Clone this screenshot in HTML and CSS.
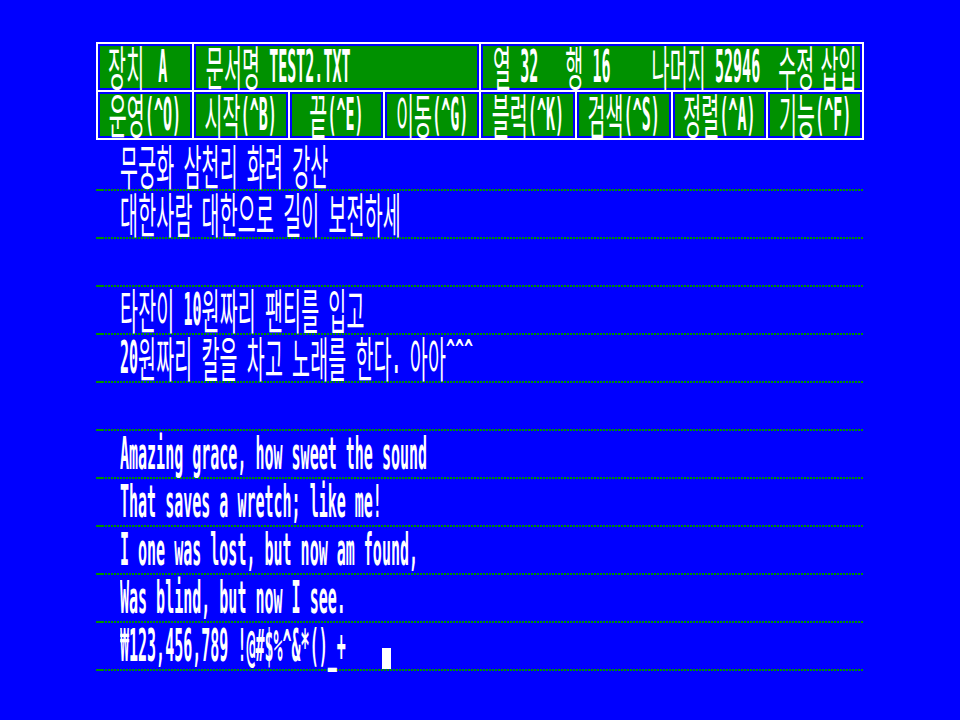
FILE: index.html
```html
<!DOCTYPE html>
<html lang="ko">
<head>
<meta charset="utf-8">
<title>문서 편집</title>
<link rel="stylesheet" href="styles.css">
</head>
<body>
<div class="screen">
  <div class="header">
    <div class="cell span1 pad-a"><span class="k">장치</span><span class="sp-a"></span><span class="e">A</span></div>
    <div class="cell span3 pad-b"><span class="k">문서명</span><span class="e"> TEST2.TXT</span></div>
    <div class="cell span4 pad-b"><span class="k">열</span><span class="e"> 32   </span><span class="k">행</span><span class="e"> 16</span><span class="sp-rest"></span><span class="k">나머지</span><span class="e"> 52946</span><span class="sp2"></span><span class="k">수정</span><span class="sp-s"></span><span class="k">삽입</span></div>
    <div class="cell center"><span class="k">운영</span><span class="e">(^O)</span></div>
    <div class="cell center"><span class="k">시작</span><span class="e">(^B)</span></div>
    <div class="cell center"><span class="k">끝</span><span class="e">(^E)</span></div>
    <div class="cell center"><span class="k">이동</span><span class="e">(^G)</span></div>
    <div class="cell center"><span class="k">블럭</span><span class="e">(^K)</span></div>
    <div class="cell center"><span class="k">검색</span><span class="e">(^S)</span></div>
    <div class="cell center"><span class="k">정렬</span><span class="e">(^A)</span></div>
    <div class="cell center"><span class="k">기능</span><span class="e">(^F)</span></div>
  </div>
  <div class="lines">
    <div class="row"><span class="k">무궁화</span><span class="sp"></span><span class="k">삼천리</span><span class="sp"></span><span class="k">화려</span><span class="sp"></span><span class="k">강산</span></div>
    <div class="row"><span class="k">대한사람</span><span class="sp"></span><span class="k">대한으로</span><span class="sp"></span><span class="k">길이</span><span class="sp"></span><span class="k">보전하세</span></div>
    <div class="row"></div>
    <div class="row"><span class="k">타잔이</span><span class="e"> 10</span><span class="k">원짜리</span><span class="sp"></span><span class="k">팬티를</span><span class="sp"></span><span class="k">입고</span></div>
    <div class="row"><span class="e">20</span><span class="k">원짜리</span><span class="sp"></span><span class="k">칼을</span><span class="sp"></span><span class="k">차고</span><span class="sp"></span><span class="k">노래를</span><span class="sp"></span><span class="k">한다</span><span class="e">.</span><span class="sp"></span><span class="k">아아</span><span class="e caret">^^^</span></div>
    <div class="row"></div>
    <div class="row"><span class="e">Amazing grace, how sweet the sound</span></div>
    <div class="row"><span class="e">That saves a wretch; like me!</span></div>
    <div class="row"><span class="e">I one was lost, but now am found,</span></div>
    <div class="row"><span class="e">Was blind, but now I see.</span></div>
    <div class="row"><span class="e">₩123,456,789 !@#$%^&amp;*()_+</span><span class="sp4"></span><span class="cur"></span></div>
  </div>
</div>
</body>
</html>
```
FILE: styles.css
```css
html, body {
  margin: 0;
  padding: 0;
}

body {
  background: #0000ff;
  width: 960px;
  height: 720px;
  overflow: hidden;
  color: #ffffff;
}

.screen {
  padding: 42px 96px 0 96px;
}

.header {
  width: 768px;
  box-sizing: border-box;
  background: #ffffff;
  padding: 2px;
  display: grid;
  grid-template-columns: repeat(8, 1fr);
  gap: 2px;
}

.cell {
  background: #009100;
  border: 2px solid #0000ff;
  height: 46px;
  box-sizing: border-box;
  display: flex;
  align-items: center;
}

.span1 { grid-column: span 1; }
.span3 { grid-column: span 3; }
.span4 { grid-column: span 4; }
.pad-a { padding-left: 8px; }
.pad-b { padding-left: 10px; }
.center { justify-content: center; }

.lines {
  margin-top: 3px;
  width: 768px;
}

.row {
  height: 48px;
  box-sizing: border-box;
  padding: 0 0 2px 24px;
  display: flex;
  align-items: center;
  background:
    linear-gradient(#009100, #009100) left bottom / 6px 2px no-repeat,
    repeating-linear-gradient(90deg, #009100 0 2px, transparent 2px 3px) left bottom / 100% 2px no-repeat;
}

.k {
  font-family: "Noto Sans CJK KR", sans-serif;
  font-size: 19.5px;
  letter-spacing: 0.2px;
  line-height: 15px;
  white-space: pre;
  transform: translateY(-2px) scaleY(2.45);
}

.e {
  font-family: "DejaVu Sans Mono", "Noto Sans CJK KR", monospace;
  font-weight: bold;
  font-size: 15px;
  line-height: 12px;
  white-space: pre;
  transform: scaleY(3);
}

.sp { flex: 0 0 9px; }
.sp2 { flex: 0 0 18px; }
.sp4 { flex: 0 0 36px; }
.sp-a { flex: 0 0 14px; }
.sp-s { flex: 0 0 6px; }
.sp-rest { flex: 0 0 41px; }

.caret {
  align-self: flex-start;
  margin-top: 8px;
  transform: scaleY(1.6);
}

.cur {
  width: 9px;
  height: 21px;
  background: #ffffff;
  align-self: flex-end;
}
```
